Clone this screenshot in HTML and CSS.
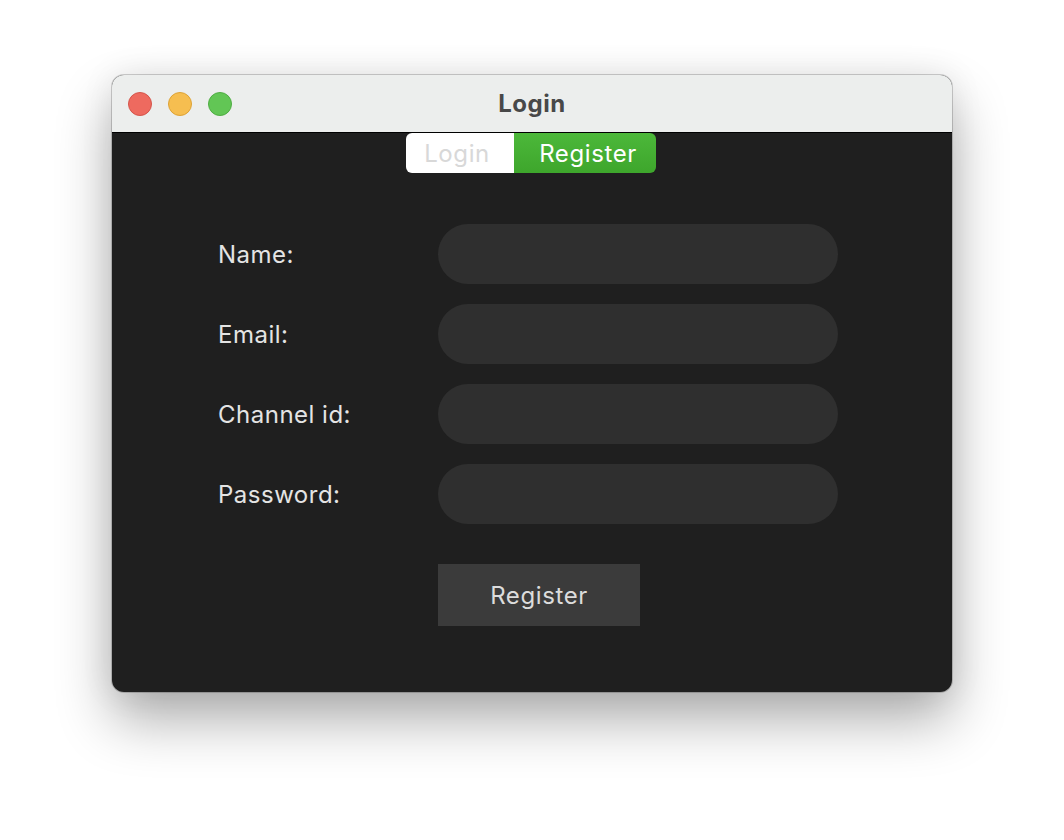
FILE: index.html
```html
<!DOCTYPE html>
<html>
<head>
<meta charset="utf-8">
<link rel="stylesheet" href="styles.css">
</head>
<body>
<div class="window">
  <div class="titlebar">
    <div class="lights">
      <span class="light red"></span>
      <span class="light yellow"></span>
      <span class="light green"></span>
    </div>
    <div class="title">Login</div>
  </div>
  <div class="content">
    <div class="segmented">
      <div class="seg seg-off">Login</div>
      <div class="seg seg-on">Register</div>
    </div>
    <div class="form">
      <label class="label">Name:</label><div class="field"></div>
      <label class="label">Email:</label><div class="field"></div>
      <label class="label">Channel id:</label><div class="field"></div>
      <label class="label">Password:</label><div class="field"></div>
      <div></div><div class="btn">Register</div>
    </div>
  </div>
</div>
</body>
</html>
```
FILE: styles.css
```css
html, body {
  margin: 0;
  padding: 0;
  background: #ffffff;
  font-family: "Inter", "Roboto", "Liberation Sans", sans-serif;
}
body {
  width: 1064px;
  height: 840px;
  overflow: hidden;
}
.window {
  margin: 75px 0 0 112px;
  width: 840px;
  height: 617px;
  border-radius: 12px;
  overflow: hidden;
  background: #1f1f1f;
  box-shadow: 0 0 0 1px rgba(0,0,0,0.18), 0 28px 55px rgba(0,0,0,0.32), 0 0 34px rgba(0,0,0,0.08);
  display: flex;
  flex-direction: column;
}
.titlebar {
  height: 57px;
  background: #eceeed;
  border-bottom: 1px solid #000;
  display: flex;
  align-items: center;
  position: relative;
  flex: none;
}
.lights {
  display: flex;
  gap: 16px;
  padding-left: 16px;
}
.light {
  width: 24px;
  height: 24px;
  border-radius: 50%;
  box-sizing: border-box;
}
.red { background: #ee6a5f; border: 1px solid #d5554b; }
.yellow { background: #f6be50; border: 1px solid #dea336; }
.green { background: #62c655; border: 1px solid #4fad43; }
.title {
  position: absolute;
  left: 0;
  right: 0;
  top: 0;
  bottom: 0;
  display: flex;
  align-items: center;
  justify-content: center;
  font-size: 24px;
  font-weight: 700;
  letter-spacing: 0.5px;
  color: #484848;
}
.content {
  flex: 1;
  display: flex;
  flex-direction: column;
  align-items: center;
}
.segmented {
  display: flex;
  height: 40px;
  border-radius: 6px;
  overflow: hidden;
  margin-left: -2px;
}
.seg {
  display: flex;
  align-items: center;
  justify-content: center;
  font-size: 24px;
  letter-spacing: 0.6px;
  box-sizing: border-box;
}
.seg-off {
  width: 108px;
  padding-right: 6px;
  background: #ffffff;
  color: #d8d8d8;
}
.seg-on {
  width: 142px;
  padding-left: 6px;
  background: linear-gradient(#4cb83a, #3ea62c);
  color: #ffffff;
}
.form {
  align-self: flex-start;
  margin: 51px 0 0 106px;
  display: grid;
  grid-template-columns: 220px 400px;
  row-gap: 20px;
  align-items: center;
}
.label {
  font-size: 24px;
  letter-spacing: 0.5px;
  color: #e4e4e4;
}
.field {
  height: 60px;
  border-radius: 30px;
  background: #2f2f2f;
}
.btn {
  margin-top: 20px;
  width: 202px;
  height: 62px;
  background: #3b3b3b;
  color: #dcdcdc;
  font-size: 24px;
  letter-spacing: 0.6px;
  display: flex;
  align-items: center;
  justify-content: center;
}
```
